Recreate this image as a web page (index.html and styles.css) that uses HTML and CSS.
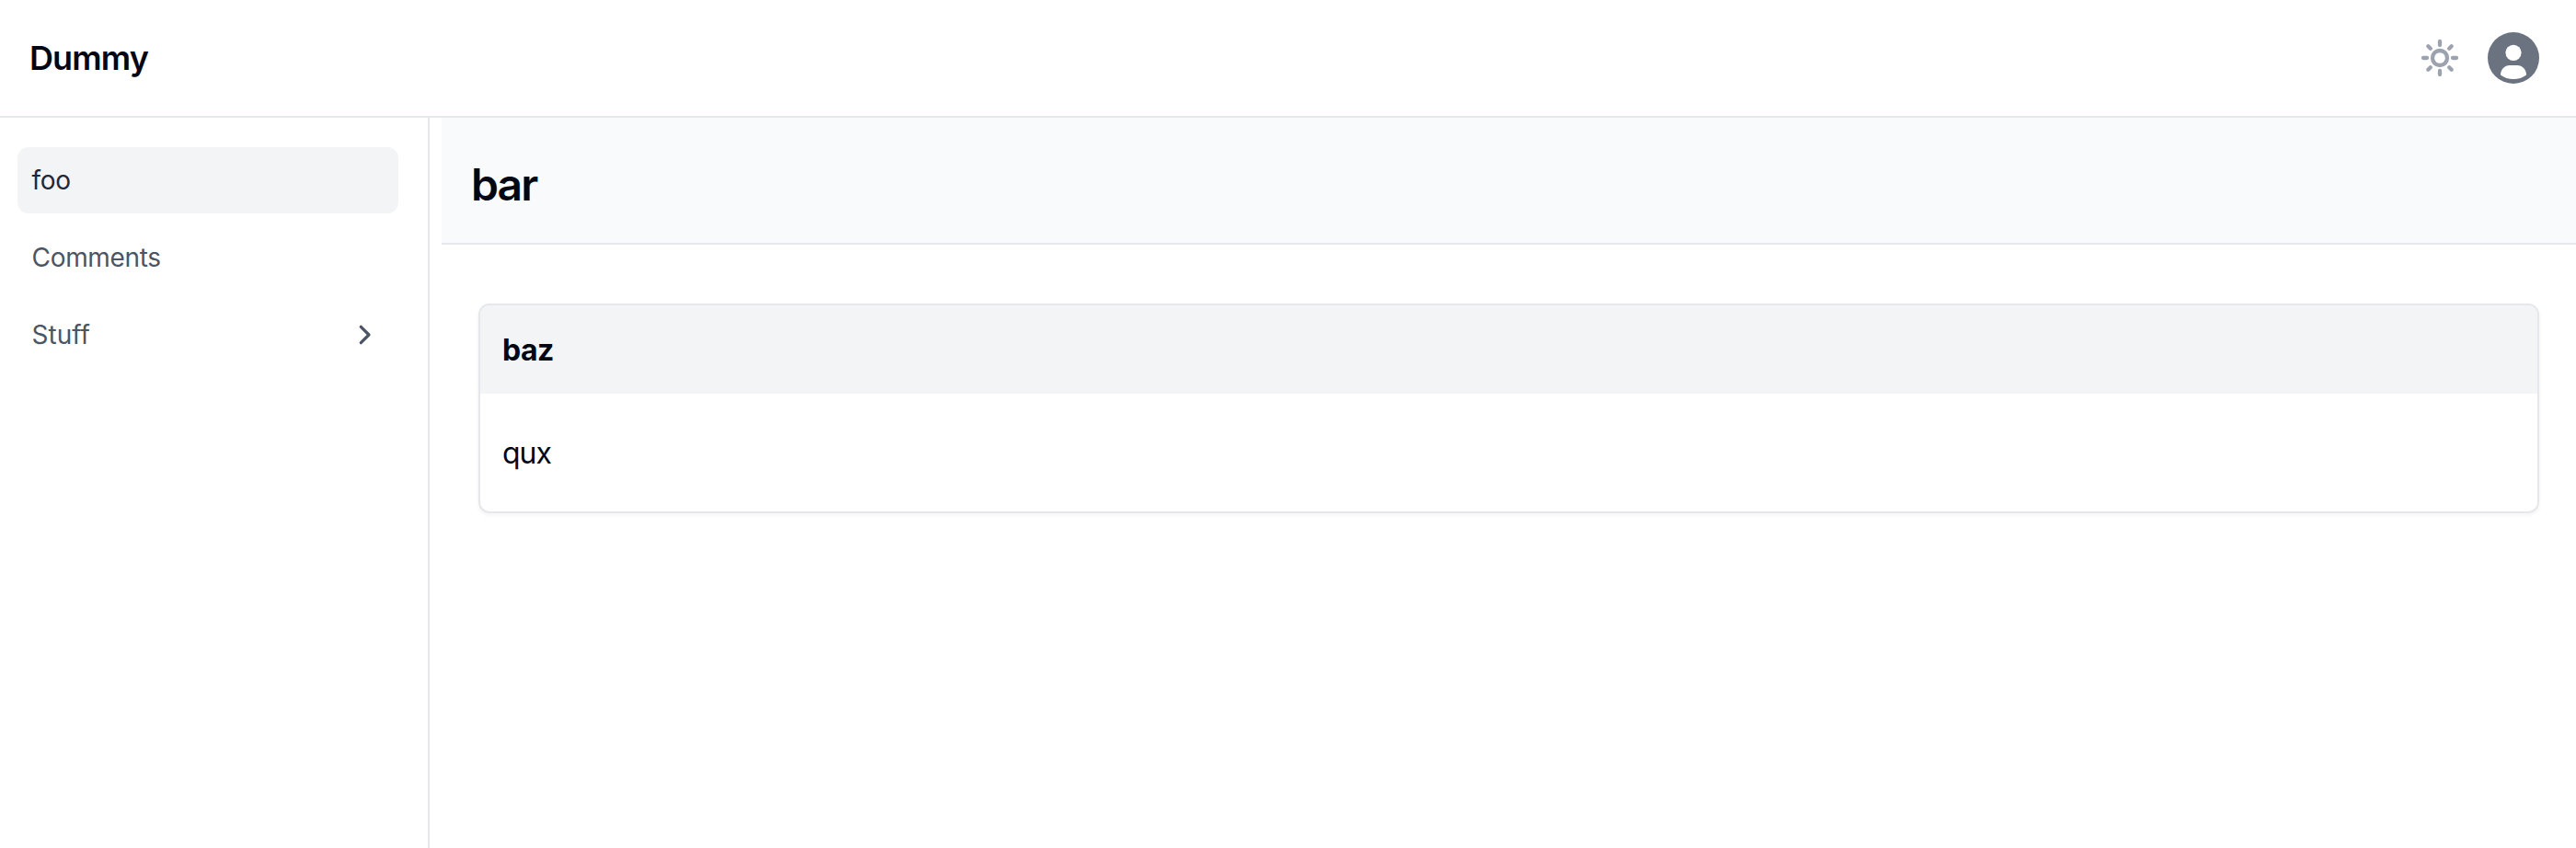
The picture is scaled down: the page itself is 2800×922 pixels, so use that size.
FILE: index.html
```html
<!DOCTYPE html>
<html lang="en">
<head>
<meta charset="utf-8">
<title>Dummy</title>
<link rel="stylesheet" href="styles.css">
</head>
<body>
<header class="topbar">
  <div class="brand">Dummy</div>
  <div class="actions">
    <svg class="sun" viewBox="-24 -24 48 48" fill="none" stroke="currentColor" stroke-width="4.3" stroke-linecap="round">
      <circle r="8"/>
      <path d="M0-18v4M0 14v4M-18 0h4M14 0h4M-12.7-12.7l2.500 2.500M10.200 10.200l2.500 2.500M-12.700 12.700l2.500-2.500M10.200-10.200l2.500-2.500"/>
    </svg>
    <svg class="avatar" viewBox="-28 -28 56 56">
      <circle r="28" fill="#6b7280"/>
      <circle cy="-5.7" r="8.6" fill="#fff"/>
      <path d="M-4 8H4C9.500 8 14 12.500 14 18.500Q8 23 0 23Q-8 23-14 18.500C-14 12.500-9.500 8-4 8Z" fill="#fff"/>
    </svg>
  </div>
</header>
<div class="layout">
  <nav class="sidebar">
    <a class="nav-item active">foo</a>
    <a class="nav-item">Comments</a>
    <a class="nav-item"><span class="label-wide">Stuff</span>
      <svg class="chevron" viewBox="0 0 14 22" fill="none" stroke="currentColor" stroke-width="3.2" stroke-linecap="round" stroke-linejoin="round"><path d="M2.300 2.300L11 11l-8.700 8.700"/></svg>
    </a>
  </nav>
  <main class="main">
    <div class="page-header"><h1 class="page-title">bar</h1></div>
    <section class="card">
      <h2 class="card-title">baz</h2>
      <div class="card-body">qux</div>
    </section>
  </main>
</div>
</body>
</html>
```
FILE: styles.css
```css
* { box-sizing: border-box; }
body {
  margin: 0;
  height: 922px;
  display: flex;
  flex-direction: column;
  overflow: hidden;
  background: #fff;
  color: #030712;
  font-family: Inter, "Liberation Sans", sans-serif;
}
.topbar {
  height: 128px;
  flex: none;
  display: flex;
  align-items: center;
  justify-content: space-between;
  padding: 0 40px 0 32px;
  border-bottom: 2px solid #e5e7eb;
}
.brand { font-size: 36px; font-weight: 600; letter-spacing: -0.025em; }
.actions { display: flex; align-items: center; gap: 28px; }
.sun { width: 48px; height: 48px; color: #9ca3af; }
.avatar { width: 56px; height: 56px; }
.layout { flex: 1; display: flex; }
.sidebar {
  width: 467px;
  flex: none;
  display: flex;
  flex-direction: column;
  gap: 12px;
  padding: 32px 32.5px 0 19px;
  border-right: 2px solid #e5e7eb;
}
.nav-item {
  height: 72px;
  display: flex;
  align-items: center;
  justify-content: space-between;
  padding: 0 28.5px 0 15.6px;
  border-radius: 12px;
  color: #4b5563;
  font-size: 28px;
  letter-spacing: -0.35px;
}
.active { background: #f3f4f6; color: #1f2937; }
.label-wide { letter-spacing: 0; }
.chevron { width: 14px; height: 22px; }
.main { flex: 1; margin-left: 13px; }
.page-header {
  height: 138px;
  display: flex;
  align-items: center;
  padding: 9px 32px 0;
  background: #f9fafb;
  border-bottom: 2px solid #e5e7eb;
}
.page-title { margin: 0; font-size: 48px; font-weight: 600; letter-spacing: -0.04em; }
.card {
  margin: 64px 40px 0;
  height: 228px;
  overflow: hidden;
  border: 2px solid #e5e7eb;
  border-radius: 12px;
  box-shadow: 0 2px 4px rgba(0, 0, 0, 0.05);
}
.card-title {
  margin: 0;
  height: 96px;
  display: flex;
  align-items: center;
  padding: 0 24px;
  background: #f3f4f6;
  font-size: 32px;
  font-weight: 700;
  letter-spacing: -0.5px;
}
.card-body {
  height: 128px;
  display: flex;
  align-items: center;
  padding: 0 24px;
  font-size: 32px;
  letter-spacing: -1px;
}
```
